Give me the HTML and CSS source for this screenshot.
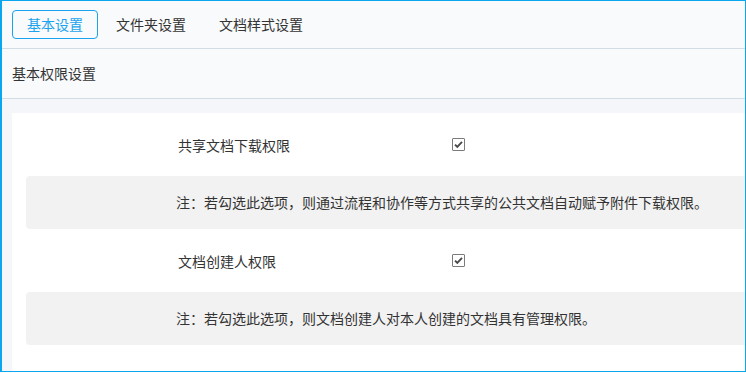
FILE: index.html
```html
<!DOCTYPE html>
<html lang="zh-CN">
<head>
<meta charset="utf-8">
<title>基本设置</title>
<link rel="stylesheet" href="styles.css">
</head>
<body>
<div class="frame">
  <div class="tabs">
    <span class="tab active">基本设置</span>
    <span class="tab">文件夹设置</span>
    <span class="tab">文档样式设置</span>
  </div>
  <div class="section-title">基本权限设置</div>
  <div class="content">
    <div class="panel">
      <div class="row">
        <span class="label">共享文档下载权限</span>
        <span class="check"><svg width="11" height="11" viewBox="0 0 11 11"><path d="M2 5.6 L4.3 7.8 L9 2.8" fill="none" stroke="#4a4a4a" stroke-width="1.9"/></svg></span>
      </div>
      <div class="note">注：若勾选此选项，则通过流程和协作等方式共享的公共文档自动赋予附件下载权限。</div>
      <div class="row">
        <span class="label">文档创建人权限</span>
        <span class="check"><svg width="11" height="11" viewBox="0 0 11 11"><path d="M2 5.6 L4.3 7.8 L9 2.8" fill="none" stroke="#4a4a4a" stroke-width="1.9"/></svg></span>
      </div>
      <div class="note">注：若勾选此选项，则文档创建人对本人创建的文档具有管理权限。</div>
    </div>
  </div>
</div>
</body>
</html>
```

FILE: styles.css
```css
* { box-sizing: border-box; }
html, body { margin: 0; padding: 0; background: #fff; }
body {
  font-family: "Noto Sans CJK SC", "Noto Sans", sans-serif;
  font-size: 14px;
  color: #333;
}
.frame {
  width: 746px;
  height: 372px;
  border: 1px solid #0aa6ee;
  border-left-width: 2px;
  display: flex;
  flex-direction: column;
  overflow: hidden;
}
.tabs {
  height: 48px;
  flex: none;
  background: #f9fafc;
  border-bottom: 1px solid #d2dde6;
  display: flex;
  align-items: center;
  padding-left: 10px;
  gap: 3px;
}
.tab {
  height: 29px;
  line-height: 27px;
  padding: 0 14px;
  border: 1px solid transparent;
  border-radius: 4px;
  color: #333;
}
.tab.active {
  border-color: #1aa3ee;
  color: #1aa3ee;
}
.section-title {
  height: 50px;
  flex: none;
  background: #f9fafc;
  border-bottom: 1px solid #d2dde6;
  line-height: 49px;
  padding-left: 10px;
}
.content {
  flex: 1;
  background: #f4f6f9;
  padding: 14px 0 0 10px;
  display: flex;
}
.panel {
  flex: 1;
  background: #fff;
  padding-left: 14px;
}
.row {
  height: 63px;
  display: flex;
  align-items: center;
  padding-left: 152px;
}
.label {
  width: 274px;
  line-height: 20px;
}
.check {
  width: 13px;
  height: 13px;
  border: 1px solid #7b7b7b;
  border-radius: 1px;
  background: #fff;
  display: flex;
  align-items: center;
  justify-content: center;
  margin-top: -1px;
}
.check svg { display: block; }
.note {
  height: 53px;
  background: #f2f2f2;
  border-radius: 4px 0 0 4px;
  padding-left: 150px;
  line-height: 53px;
  white-space: nowrap;
}
```
